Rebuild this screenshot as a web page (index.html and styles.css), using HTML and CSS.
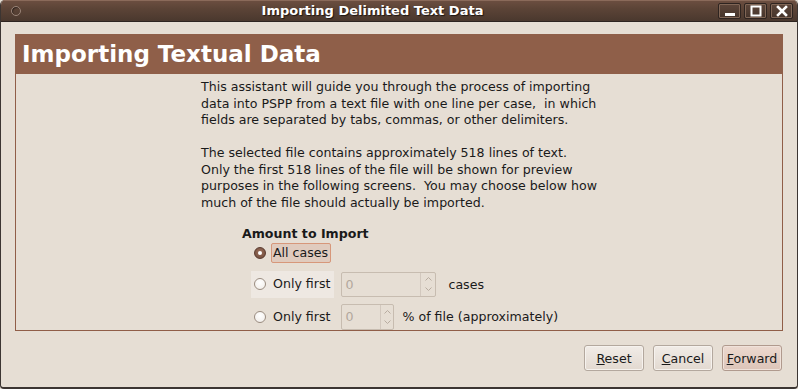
FILE: index.html
```html
<!DOCTYPE html>
<html>
<head>
<meta charset="utf-8">
<link rel="stylesheet" href="styles.css">
</head>
<body>
<div class="window">
  <div class="titlebar">
    <span class="menu-icon"></span>
    <span class="title">Importing Delimited Text Data</span>
    <div class="wm-buttons">
      <span class="wm-btn"><svg width="12" height="12" viewBox="0 0 12 12"><rect x="1" y="8" width="10" height="3" fill="#fff"/></svg></span>
      <span class="wm-btn"><svg width="12" height="12" viewBox="0 0 12 12"><rect x="1.5" y="1.5" width="9" height="9" fill="none" stroke="#fff" stroke-width="2"/></svg></span>
      <span class="wm-btn"><svg width="12" height="12" viewBox="0 0 12 12"><path d="M2 2 L10 10 M10 2 L2 10" stroke="#fff" stroke-width="2.6" stroke-linecap="square"/></svg></span>
    </div>
  </div>
  <div class="body">
    <div class="page">
      <div class="page-header">Importing Textual Data</div>
      <div class="page-content">
        <p class="intro">This assistant will guide you through the process of importing<br>data into PSPP from a text file with one line per case,&nbsp; in which<br>fields are separated by tabs, commas, or other delimiters.</p>
        <p class="intro">The selected file contains approximately 518 lines of text.<br>Only the first 518 lines of the file will be shown for preview<br>purposes in the following screens.&nbsp; You may choose below how<br>much of the file should actually be imported.</p>
        <div class="amount">
          <div class="amount-title">Amount to Import</div>
          <div class="option opt-all">
            <span class="radio-btn">
              <span class="radio checked"></span>
              <span class="label focused">All cases</span>
            </span>
          </div>
          <div class="option opt-first">
            <span class="radio-btn hover">
              <span class="radio"></span>
              <span class="label">Only first</span>
            </span>
            <span class="spin wide"><span class="spin-val">0</span><span class="spin-arrows"><svg width="9" height="20" viewBox="0 0 9 20"><path d="M1.5 6.5 L4.5 3.5 L7.5 6.5" fill="none" stroke="#b8aca0" stroke-width="1"/><path d="M1.5 13.5 L4.5 16.5 L7.5 13.5" fill="none" stroke="#b8aca0" stroke-width="1"/></svg></span></span>
            <span class="suffix">cases</span>
          </div>
          <div class="option opt-pct">
            <span class="radio-btn">
              <span class="radio"></span>
              <span class="label">Only first</span>
            </span>
            <span class="spin narrow"><span class="spin-val">0</span><span class="spin-arrows"><svg width="9" height="20" viewBox="0 0 9 20"><path d="M1.5 6.5 L4.5 3.5 L7.5 6.5" fill="none" stroke="#b8aca0" stroke-width="1"/><path d="M1.5 13.5 L4.5 16.5 L7.5 13.5" fill="none" stroke="#b8aca0" stroke-width="1"/></svg></span></span>
            <span class="suffix">% of file (approximately)</span>
          </div>
        </div>
      </div>
    </div>
    <div class="actions">
      <button class="btn"><u>R</u>eset</button>
      <button class="btn"><u>C</u>ancel</button>
      <button class="btn default"><u>F</u>orward</button>
    </div>
  </div>
</div>
</body>
</html>
```
FILE: styles.css
```css
html, body {
  margin: 0;
  padding: 0;
  background: #e6ded4;
}
body {
  width: 798px;
  height: 389px;
  overflow: hidden;
  font-family: "DejaVu Sans", sans-serif;
  font-size: 12.6px;
  color: #1a1a1a;
}
.window {
  width: 798px;
  height: 389px;
  box-sizing: border-box;
  display: flex;
  flex-direction: column;
  background: #e6ded4;
  border-left: 1px solid #3c3532;
  border-right: 1px solid #3c3532;
  border-bottom: 2px solid #3c3532;
  border-radius: 5px 5px 4px 4px;
  overflow: hidden;
}
.titlebar {
  height: 22px;
  flex: none;
  display: flex;
  align-items: center;
  background: linear-gradient(#6d4f41 0%, #5c4437 40%, #4a382e 100%);
  border-bottom: 1px solid #2e2420;
  box-sizing: border-box;
  box-shadow: inset 0 1px 0 #8a6a5a;
}
.menu-icon {
  width: 8px;
  height: 8px;
  margin-left: 10px;
  border-radius: 50%;
  border: 1px solid #9a8478;
  box-shadow: inset 1px 1px 1px #2e231d;
}
.title {
  flex: 1;
  text-align: center;
  font-weight: bold;
  font-size: 13px;
  color: #fff;
  text-shadow: 1px 1px 1px #1e1612;
  padding-left: 6px;
}
.wm-buttons {
  display: flex;
  gap: 3px;
  margin-right: 4px;
}
.wm-btn {
  width: 23px;
  height: 16px;
  box-sizing: border-box;
  display: flex;
  align-items: center;
  justify-content: center;
  border: 1px solid #2e2420;
  border-radius: 2px;
  background: linear-gradient(#5d463a, #45342b);
  box-shadow: inset 0 0 0 1px #806656;
}
.body {
  flex: 1;
  display: flex;
  flex-direction: column;
  padding: 12px 14px 0 14px;
}
.page {
  display: flex;
  flex-direction: column;
  width: 768px;
}
.page-header {
  height: 40px;
  background: #8f5f49;
  color: #fff;
  font-weight: bold;
  font-size: 23px;
  line-height: 40px;
  padding-left: 7px;
}
.page-content {
  height: 257px;
  box-sizing: border-box;
  border: 1px solid #905e48;
  border-top: none;
  padding: 5px 0 0 185px;
}
.intro {
  margin: 0 0 16.5px 0;
  line-height: 16.5px;
}
.amount {
  margin-left: 41px;
  margin-top: -2px;
}
.amount-title {
  font-weight: bold;
  line-height: 16px;
}
.option {
  display: flex;
  align-items: center;
  padding-left: 9px;
}
.opt-all {
  height: 22px;
}
.opt-first {
  height: 27px;
  margin-top: 7px;
}
.opt-pct {
  height: 26px;
  margin-top: 6px;
}
.radio-btn {
  display: flex;
  align-items: center;
  align-self: stretch;
  padding: 0 4px 0 3px;
}
.radio-btn.hover {
  background: #eee8e2;
}
.radio {
  width: 12px;
  height: 12px;
  box-sizing: border-box;
  border-radius: 50%;
  border: 1px solid #9a8c80;
  background: radial-gradient(circle at 50% 35%, #ffffff, #f0ebe6);
  position: relative;
  margin-right: 5px;
}
.radio.checked {
  background: radial-gradient(circle at 50% 40%, #9a6e5a, #6e4a3a);
  border-color: #5a3a2e;
}
.radio.checked::after {
  content: "";
  position: absolute;
  left: 3px;
  top: 3px;
  width: 4px;
  height: 4px;
  border-radius: 50%;
  background: #fff;
}
.label {
  line-height: 16px;
  padding-left: 2px;
}
.label.focused {
  border: 1px solid #d7977a;
  background: #e0cbbe;
  border-radius: 2px;
  padding: 1px 2px 1px 1px;
}
.spin {
  display: flex;
  height: 25px;
  box-sizing: border-box;
  border: 1px solid #c7bcb0;
  border-radius: 2px;
  background: #e6ded4;
  color: #b2a79c;
  margin-left: 7px;
}
.spin.wide {
  width: 95px;
}
.spin.narrow {
  width: 53px;
  height: 26px;
}
.spin-val {
  flex: 1;
  padding-left: 3px;
  line-height: 23px;
}
.spin-arrows {
  width: 14px;
  border-left: 1px solid #d2c8be;
  display: flex;
  align-items: center;
  justify-content: center;
}
.narrow .spin-arrows {
  width: 12px;
}
.suffix {
  margin-left: 12px;
}
.opt-pct .suffix {
  margin-left: 8px;
}
.actions {
  display: flex;
  justify-content: flex-end;
  gap: 9px;
  margin-top: 14px;
  margin-right: 1px;
}
.btn {
  width: 60px;
  height: 26px;
  font-family: "DejaVu Sans", sans-serif;
  font-size: 12.6px;
  color: #1a1a1a;
  border: 1px solid #b3a89e;
  border-radius: 3px;
  background: linear-gradient(#f1ece7, #e2d9d0);
  box-shadow: inset 0 0 0 1px #f6f2ee;
  padding: 0;
}
.btn.default {
  background: linear-gradient(#ecd9cf, #dcc4b8);
  border-color: #b09a8e;
  box-shadow: inset 0 0 0 1px #f0e2da;
}
```
